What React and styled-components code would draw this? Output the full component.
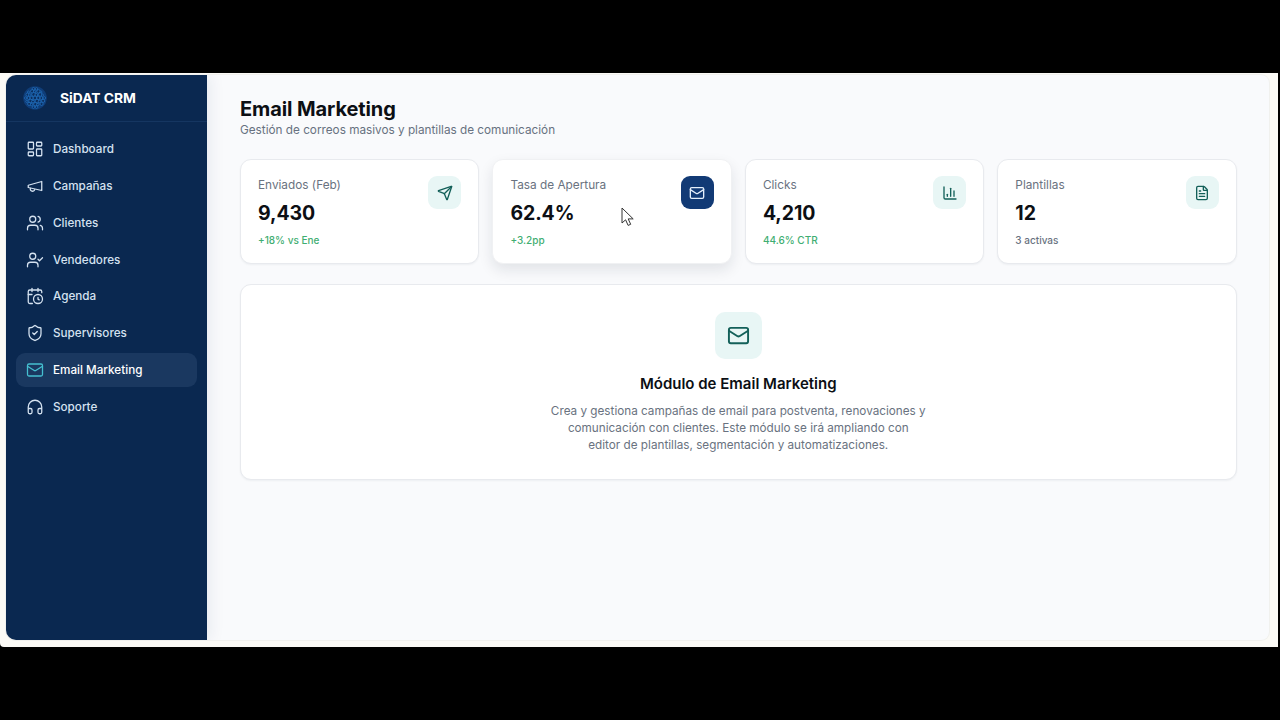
import React from 'react';
import styled, { createGlobalStyle, css } from 'styled-components';
import {
    LayoutDashboard, Users, UserCheck, CalendarClock, ShieldCheck,
    Mail, Headphones, Send, ChartColumn, FileText
} from 'lucide-react';

const GlobalStyle = createGlobalStyle`
    html, body {
        margin: 0;
        padding: 0;
        height: 720px;
        overflow: hidden;
        background: #000;
        font-family: "Inter", "Liberation Sans", sans-serif;
    }
`;

// older lucide megaphone, the one in the package now has a different outline
const MegaphoneIcon = ({ size, strokeWidth }) => (
    <svg width={size} height={size} viewBox="0 0 24 24" fill="none" stroke="currentColor" strokeWidth={strokeWidth} strokeLinecap="round" strokeLinejoin="round">
        <path d="m3 11 18-5v12L3 14v-3z" />
        <path d="M11.6 16.8a3 3 0 1 1-5.8-1.6" />
    </svg>
);

const navItems = [
    { label: 'Dashboard', icon: LayoutDashboard },
    { label: 'Campañas', icon: MegaphoneIcon },
    { label: 'Clientes', icon: Users },
    { label: 'Vendedores', icon: UserCheck },
    { label: 'Agenda', icon: CalendarClock },
    { label: 'Supervisores', icon: ShieldCheck },
    { label: 'Email Marketing', icon: Mail, active: true },
    { label: 'Soporte', icon: Headphones },
];

const stats = [
    { label: 'Enviados (Feb)', value: '9,430', note: '+18% vs Ene', icon: Send, tone: 'good' },
    { label: 'Tasa de Apertura', value: '62.4%', note: '+3.2pp', icon: Mail, tone: 'good', hovered: true },
    { label: 'Clicks', value: '4,210', note: '44.6% CTR', icon: ChartColumn, tone: 'good' },
    { label: 'Plantillas', value: '12', note: '3 activas', icon: FileText },
];

// cells of the globe in the logo, uneven and bent towards the edge so it reads as a sphere
const globeCells = [];
for (let row = -3; row <= 3; row++) {
    for (let col = -3; col <= 3; col++) {
        const x = (col + (row % 2 ? 0.5 : 0)) / 3.3;
        const y = row / 3.3;
        const dist = Math.hypot(x, y);
        if (dist > 1) continue;
        const bend = 1 + (1 - dist) * 0.15;
        const wobble = Math.sin(row * 7.3 + col * 3.1);
        globeCells.push({
            x: 12 + x * bend * 10 + wobble * 0.4,
            y: 12 + y * bend * 10 - wobble * 0.3,
            r: 1.9 - dist * 0.7 + wobble * 0.3,
        });
    }
}

const Logo = () => (
    <svg width="24" height="24" viewBox="0 0 24 24" fill="none">
        <circle cx="12" cy="12" r="11.8" fill="#0f3d78" />
        <g stroke="#2476c6" strokeWidth="0.7" fill="#0b2f60">
            {globeCells.map((cell) => (
                <circle key={`${cell.x}-${cell.y}`} cx={cell.x} cy={cell.y} r={cell.r} />
            ))}
        </g>
    </svg>
);

const Cursor = styled.svg`
    position: absolute;
    left: 621px;
    top: 207px;
`;

const App = () => {
    return (
        <>
            <GlobalStyle />
            <Screen>
                <Shell>
                    <Sidebar>
                        <Brand>
                            <Logo />
                            <BrandName>SiDAT CRM</BrandName>
                        </Brand>
                        <Nav>
                            {navItems.map((item) => (
                                <NavItem key={item.label} $active={item.active}>
                                    <item.icon size={18} strokeWidth={1.7} />
                                    <span>{item.label}</span>
                                </NavItem>
                            ))}
                        </Nav>
                    </Sidebar>
                    <Main>
                        <Title>Email Marketing</Title>
                        <Subtitle>Gestión de correos masivos y plantillas de comunicación</Subtitle>
                        <StatGrid>
                            {stats.map((stat) => (
                                <StatCard key={stat.label} $hovered={stat.hovered}>
                                    <div>
                                        <StatLabel>{stat.label}</StatLabel>
                                        <StatValue>{stat.value}</StatValue>
                                        <StatNote $tone={stat.tone}>{stat.note}</StatNote>
                                    </div>
                                    <StatIcon $hovered={stat.hovered}>
                                        <stat.icon size={16} strokeWidth={2} />
                                    </StatIcon>
                                </StatCard>
                            ))}
                        </StatGrid>
                        <ModulePanel>
                            <ModuleIcon>
                                <Mail size={23} strokeWidth={2} />
                            </ModuleIcon>
                            <ModuleTitle>Módulo de Email Marketing</ModuleTitle>
                            <ModuleText>
                                Crea y gestiona campañas de email para postventa, renovaciones y<br />
                                comunicación con clientes. Este módulo se irá ampliando con<br />
                                editor de plantillas, segmentación y automatizaciones.
                            </ModuleText>
                        </ModulePanel>
                    </Main>
                </Shell>
                <Cursor width="14" height="20" viewBox="0 0 14 20">
                    <path d="M1 1v15l3.6-3.2 2.5 5.6 2.6-1.1-2.5-5.4h5z" fill="#fff" stroke="#333" strokeWidth="1" strokeLinejoin="round" />
                </Cursor>
            </Screen>
        </>
    );
};

const Screen = styled.div`
    box-sizing: border-box;
    width: 1278px;
    height: 574px;
    margin-top: 73px;
    padding: 2px 9px 7px 6px;
    background: #fbfaf6;
    border-bottom-left-radius: 4px;
`;

const Shell = styled.div`
    display: flex;
    height: 100%;
    border-radius: 10px 8px 8px 10px;
    overflow: hidden;
    background: #f9fafc;
    box-shadow: 0 0 0 1px #f1f1ee;
`;

const Sidebar = styled.aside`
    flex: 0 0 201px;
    background: #0a2850;
    box-shadow: 4px 0 14px rgba(10, 40, 80, 0.07);
    z-index: 1;
`;

const Brand = styled.div`
    display: flex;
    align-items: center;
    gap: 13px;
    box-sizing: border-box;
    height: 47px;
    padding: 0 17px 1px;
    border-bottom: 1px solid #153661;
`;

const BrandName = styled.div`
    color: #fff;
    font-size: 13.8px;
    font-weight: 700;
    line-height: 18px;
`;

const Nav = styled.nav`
    display: flex;
    flex-direction: column;
    gap: 2.85px;
    padding: 10px 10px 0;
`;

const NavItem = styled.div`
    display: flex;
    align-items: center;
    gap: 9px;
    height: 34px;
    padding: 0 10px;
    border-radius: 9px;
    color: #d5e2f0;
    font-size: 11.7px;
    font-weight: 500;
    ${(props) => props.$active && css`
        background: #1a3860;
        color: #fff;
        svg {
            color: #45bfd0;
        }
    `}
`;

const Main = styled.main`
    flex: 1;
    min-width: 0;
    padding: 22px 32.5px 0 33px;
`;

const Title = styled.h1`
    margin: 0;
    color: #0c0f14;
    font-size: 20px;
    font-weight: 700;
    letter-spacing: -0.1px;
    line-height: 24px;
`;

const Subtitle = styled.p`
    margin: 1px 0 0;
    color: #677180;
    font-size: 11.75px;
    line-height: 17px;
`;

const StatGrid = styled.div`
    display: grid;
    grid-template-columns: repeat(4, 1fr);
    gap: 13.3px;
    margin-top: 20px;
`;

const StatCard = styled.div`
    display: flex;
    justify-content: space-between;
    box-sizing: border-box;
    height: 105px;
    padding: 16px 17px;
    background: #fff;
    border: 1px solid #e8eaee;
    border-radius: 11px;
    box-shadow: 0 1px 2px rgba(20, 30, 50, 0.05);
    ${(props) => props.$hovered && css`
        border-color: #f0f1f3;
        box-shadow: 0 6px 14px rgba(20, 30, 50, 0.1);
    `}
`;

const StatLabel = styled.div`
    color: #697280;
    font-size: 11.8px;
    line-height: 18px;
`;

const StatValue = styled.div`
    margin-top: 7px;
    color: #0c0f14;
    font-size: 19.5px;
    font-weight: 700;
    letter-spacing: -0.1px;
    line-height: 24px;
`;

const StatNote = styled.div`
    margin-top: 8px;
    color: ${(props) => (props.$tone === 'good' ? '#3fae72' : '#697280')};
    font-size: 10px;
    font-weight: 500;
    line-height: 14px;
`;

const StatIcon = styled.div`
    display: flex;
    align-items: center;
    justify-content: center;
    width: 33px;
    height: 33px;
    border-radius: 9px;
    background: ${(props) => (props.$hovered ? '#123a75' : '#e8f6f5')};
    color: ${(props) => (props.$hovered ? '#e4eefa' : '#136059')};
`;

const ModulePanel = styled.section`
    display: flex;
    flex-direction: column;
    align-items: center;
    box-sizing: border-box;
    height: 196px;
    margin-top: 20px;
    padding-top: 27px;
    background: #fff;
    border: 1px solid #e8eaee;
    border-radius: 11px;
    box-shadow: 0 1px 2px rgba(20, 30, 50, 0.05);
`;

const ModuleIcon = styled.div`
    display: flex;
    align-items: center;
    justify-content: center;
    width: 47px;
    height: 47px;
    border-radius: 10px;
    background: #e8f6f5;
    color: #136059;
`;

const ModuleTitle = styled.h2`
    margin: 16px 0 0;
    color: #0c0f14;
    font-size: 15px;
    font-weight: 600;
    line-height: 18px;
`;

const ModuleText = styled.p`
    margin: 10px 0 0;
    color: #697280;
    font-size: 11.72px;
    line-height: 17px;
    text-align: center;
`;

export default App;
